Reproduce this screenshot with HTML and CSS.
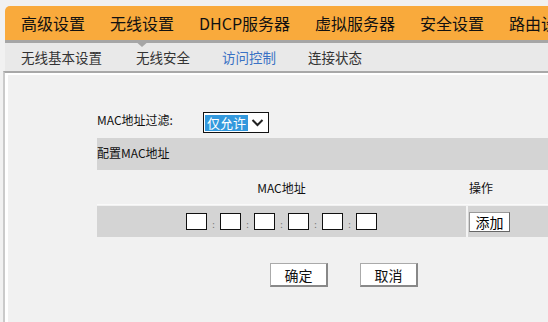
FILE: index.html
```html
<!DOCTYPE html>
<html lang="zh-CN">

<head>
    <meta charset="utf-8">
    <meta name="viewport" content="width=device-width, initial-scale=1.0">
    <title>访问控制</title>
    <link rel="stylesheet" href="styles.css">
</head>

<body>
    <header class="top">
        <nav class="menu">
            <a href="#">高级设置</a>
            <a href="#" class="on">无线设置</a>
            <a href="#">DHCP服务器</a>
            <a href="#">虚拟服务器</a>
            <a href="#">安全设置</a>
            <a href="#">路由设置</a>
        </nav>
        <div class="menu-line"></div>
        <nav class="submenu">
            <a href="#">无线基本设置</a>
            <a href="#">无线安全</a>
            <a href="#" class="on">访问控制</a>
            <a href="#">连接状态</a>
        </nav>
    </header>

    <main class="content">
        <div class="form">
            <div class="filter-row">
                <span class="label">MAC地址过滤:</span>
                <div class="select">
                    <span class="selected">仅允许</span>
                    <svg width="13" height="9" viewBox="0 0 13 9">
                        <path d="M1.5 2 L6.5 7 L11.5 2" fill="none" stroke="#222" stroke-width="2"/>
                    </svg>
                </div>
            </div>

            <div class="band">配置MAC地址</div>

            <div class="mac-table">
                <div class="head-row">
                    <div class="col-mac">MAC地址</div>
                    <div class="col-op">操作</div>
                </div>
                <div class="input-row">
                    <div class="col-mac">
                        <input type="text"><span class="colon">:</span>
                        <input type="text"><span class="colon">:</span>
                        <input type="text"><span class="colon">:</span>
                        <input type="text"><span class="colon">:</span>
                        <input type="text"><span class="colon">:</span>
                        <input type="text">
                    </div>
                    <div class="col-op">
                        <button class="btn-add">添加</button>
                    </div>
                </div>
            </div>

            <div class="actions">
                <button class="btn">确定</button>
                <button class="btn">取消</button>
            </div>
        </div>
    </main>
</body>

</html>
```

FILE: styles.css
```css
body {
    margin: 0;
    background-color: #f1f1f1;
    font-family: "Noto Sans CJK SC", "Liberation Sans", sans-serif;
    color: #111;
    overflow: hidden;
}

a {
    text-decoration: none;
}

.top {
    margin-left: 5px;
    padding-top: 6px;
}

.menu {
    height: 34px;
    background-color: #f9aa3c;
    border-top-left-radius: 5px;
    display: flex;
    gap: 25px;
    padding-left: 16px;
    white-space: nowrap;
    overflow: hidden;
    font-size: 16px;
}

.menu a {
    color: #111;
    display: flex;
    align-items: center;
    flex-shrink: 0;
}

.menu-line {
    height: 3px;
    background-color: #a6a6a6;
    position: relative;
}

/* small pointer under the open tab */
.menu-line::after {
    content: "";
    position: absolute;
    left: 129px;
    top: 0;
    border-left: 8px solid transparent;
    border-right: 8px solid transparent;
    border-top: 7px solid #a6a6a6;
}

.submenu {
    height: 28px;
    background-color: #e9e9e9;
    display: flex;
    align-items: center;
    gap: 32px;
    padding-left: 16px;
    font-size: 13.5px;
}

.submenu a {
    color: #333;
}

.submenu a:first-child {
    margin-right: 2px;
}

.submenu a.on {
    color: #3a72c4;
}

.content {
    margin-left: 3px;
    border-top: 2px solid #a8a8a8;
    border-left: 2px solid #cacaca;
    box-shadow: inset 3px 2px 0 #fff;
    height: 260px;
}

.form {
    padding-top: 39px;
    padding-left: 92px;
    font-size: 12px;
}

.filter-row {
    display: flex;
    align-items: center;
    height: 21px;
}

.label {
    width: 106px;
    margin-top: -6px;
}

.select {
    width: 63px;
    height: 19px;
    border: 1px solid #111;
    background-color: #fff;
    display: flex;
    align-items: center;
    gap: 3px;
    padding-left: 1px;
}

.selected {
    background-color: #3399dd;
    color: #fff;
    font-size: 13px;
    line-height: 16px;
    width: 43px;
    text-align: center;
}

.band {
    margin-top: 5px;
    height: 32px;
    line-height: 30px;
    background-color: #d4d4d4;
}

.head-row,
.input-row {
    display: flex;
}

.head-row {
    height: 34px;
    align-items: center;
    border-bottom: 1px solid #fafafa;
    margin-bottom: 1px;
}

.input-row {
    height: 31px;
    background-color: #d4d4d4;
}

.col-mac {
    width: 369px;
    display: flex;
    justify-content: center;
    align-items: center;
}

.col-op {
    flex: 1;
    padding-left: 3px;
    display: flex;
    align-items: center;
}

.input-row .col-op {
    border-left: 2px solid #f4f4f4;
    padding-left: 1px;
}

.input-row input {
    width: 17px;
    height: 13px;
    margin: 0;
    padding: 1px;
    border: 1px solid #111;
    background-color: #fff;
}

.colon {
    width: 13px;
    text-align: center;
    font-size: 9px;
    color: #777;
    line-height: 9px;
    padding-top: 6px;
}

.btn-add {
    width: 41px;
    height: 20px;
    padding: 0;
    background-color: #fff;
    border: 1px solid #999;
    border-right-color: #666;
    border-bottom-color: #666;
    font-family: inherit;
    font-size: 14px;
    line-height: 16px;
}

.actions {
    display: flex;
    gap: 32px;
    margin-top: 26px;
    padding-left: 173px;
}

.btn {
    width: 58px;
    height: 24px;
    padding: 0;
    background-color: #fff;
    border: 1px solid #aaa;
    border-right: 2px solid #888;
    border-bottom: 2px solid #888;
    font-family: inherit;
    font-size: 14px;
    line-height: 18px;
    color: #111;
}
```
